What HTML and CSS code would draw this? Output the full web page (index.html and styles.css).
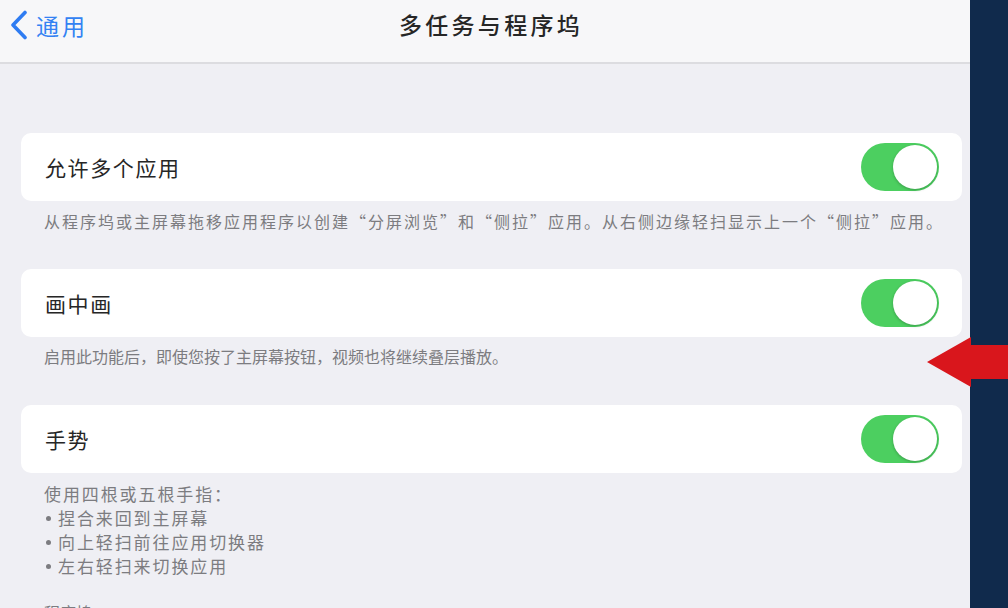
FILE: index.html
```html
<!DOCTYPE html>
<html lang="zh-CN">
<head>
<meta charset="utf-8">
<title>多任务与程序坞</title>
<link rel="stylesheet" href="styles.css">
</head>
<body>
<div class="page">
  <div class="screen">
    <header class="nav">
      <div class="back">
        <svg class="chev" width="20" height="30" viewBox="0 0 20 30"><path d="M16 2.5 L4 15 L16 27.5" fill="none" stroke="#2f7cf2" stroke-width="3.6" stroke-linecap="round" stroke-linejoin="round"/></svg>
        <span class="back-text">通用</span>
      </div>
      <div class="title">多任务与程序坞</div>
    </header>
    <main class="content">
      <section class="group g1">
        <div class="card">
          <span class="label">允许多个应用</span>
          <span class="toggle"><span class="knob"></span></span>
        </div>
        <p class="foot f1">从程序坞或主屏幕拖移应用程序以创建“分屏浏览”和“侧拉”应用。从右侧边缘轻扫显示上一个“侧拉”应用。</p>
      </section>
      <section class="group">
        <div class="card">
          <span class="label">画中画</span>
          <span class="toggle"><span class="knob"></span></span>
        </div>
        <p class="foot f2">启用此功能后，即使您按了主屏幕按钮，视频也将继续叠层播放。</p>
      </section>
      <section class="group">
        <div class="card">
          <span class="label">手势</span>
          <span class="toggle"><span class="knob"></span></span>
        </div>
        <div class="foot f3">
          <div class="ln">使用四根或五根手指：</div>
          <div class="ln"><span class="dot"></span>捏合来回到主屏幕</div>
          <div class="ln"><span class="dot"></span>向上轻扫前往应用切换器</div>
          <div class="ln"><span class="dot"></span>左右轻扫来切换应用</div>
        </div>
      </section>
      <div class="section-head">程序坞</div>
    </main>
  </div>
  <div class="side"></div>
  <svg class="arrow" width="82" height="52" viewBox="0 0 82 52"><polygon points="0,25 44,0 44,8 82,8 82,42 44,42 44,50" fill="#d9161c"/></svg>
</div>
</body>
</html>
```
FILE: styles.css
```css
* { box-sizing: border-box; }
html, body { margin: 0; padding: 0; }
body {
  width: 1008px;
  height: 608px;
  overflow: hidden;
  font-family: "Noto Sans CJK SC", "Noto Sans", sans-serif;
  background: #efeff4;
}
.page {
  position: relative;
  display: flex;
  width: 1008px;
  height: 608px;
}
.screen {
  width: 970px;
  height: 608px;
  background: #efeff4;
  overflow: hidden;
}
.side {
  flex: 1;
  background: #102a4c;
}
.nav {
  position: relative;
  height: 64px;
  background: #f7f7f9;
  border-bottom: 2px solid #dcdce0;
  display: flex;
  align-items: center;
}
.back {
  display: flex;
  align-items: center;
  padding-left: 9px;
  margin-top: -13px;
}
.chev { display: block; }
.back-text {
  margin-left: 7px;
  font-size: 23px;
  letter-spacing: 3px;
  color: #3382f3;
}
.title {
  position: absolute;
  left: 0;
  right: 0;
  top: 7px;
  text-align: center;
  font-size: 23px;
  letter-spacing: 3.3px;
  color: #262626;
  font-weight: 500;
  padding-left: 12px;
}
.content {
  padding-top: 69px;
}
.card {
  margin: 0 8px 0 21px;
  height: 68px;
  background: #fff;
  border-radius: 10px;
  display: flex;
  align-items: center;
  justify-content: space-between;
  padding: 0 23px 0 24px;
}
.label {
  font-size: 21px;
  letter-spacing: 1.6px;
  color: #262626;
}
.toggle {
  position: relative;
  width: 78px;
  height: 48px;
  border-radius: 24px;
  background: #4ccf60;
  display: block;
}
.knob {
  position: absolute;
  right: 2px;
  top: 2px;
  width: 44px;
  height: 44px;
  border-radius: 50%;
  background: #fff;
  box-shadow: 0 1px 3px rgba(0,0,0,0.25);
}
.foot {
  margin: 0;
  padding: 8px 20px 36px 44px;
  font-size: 16px;
  line-height: 24px;
  color: #7c7c80;
}
.f1 { letter-spacing: 2px; }
.f2 { padding-top: 7px; padding-bottom: 37px; letter-spacing: 0; }
.f3 { padding-top: 9px; padding-bottom: 22px; font-size: 17px; letter-spacing: 1.9px; }
.ln { height: 24px; display: flex; align-items: center; }
.dot {
  width: 5px;
  height: 5px;
  border-radius: 50%;
  background: #7c7c80;
  margin-left: 2px;
  margin-right: 7px;
  flex: none;
}
.section-head {
  padding-left: 44px;
  font-size: 16px;
  line-height: 24px;
  color: #7c7c80;
}
.arrow {
  position: absolute;
  left: 927px;
  top: 337px;
}
```
